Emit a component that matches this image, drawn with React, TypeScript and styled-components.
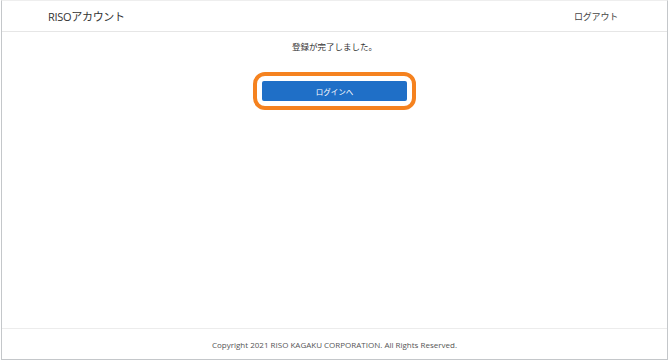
import React from "react"
import styled, { createGlobalStyle } from "styled-components"

const GlobalStyle = createGlobalStyle`
  html, body {
    margin: 0;
    padding: 0;
    background: #ffffff;
  }
  body {
    font-family: "Open Sans", "Noto Sans CJK JP", sans-serif;
    color: #333333;
  }
`

const Frame = styled.div`
  box-sizing: border-box;
  width: 667px;
  height: 360px;
  margin-left: 1px;
  border: 1px solid #c4c7ca;
  border-top-color: #eeeeee;
  display: flex;
  flex-direction: column;
  background: #ffffff;
`

const Header = styled.header`
  height: 30px;
  flex-shrink: 0;
  display: flex;
  align-items: center;
  justify-content: space-between;
  padding: 0 49px 0 46px;
  border-bottom: 1px solid #e6e6e6;
`

const Brand = styled.div`
  font-size: 11px;
  color: #333333;
  letter-spacing: -0.3px;
`

const LogoutLink = styled.a`
  font-size: 9px;
  color: #444444;
  text-decoration: none;
  letter-spacing: -0.2px;
  cursor: pointer;
`

const Main = styled.main`
  flex: 1;
  display: flex;
  flex-direction: column;
  align-items: center;
  padding-top: 9px;
`

const Message = styled.p`
  margin: 0;
  font-size: 8.5px;
  line-height: 12px;
  color: #333333;
`

const Highlight = styled.div`
  margin-top: 19px;
  padding: 5px;
  border: 4px solid #f5821f;
  border-radius: 12px;
`

const PrimaryButton = styled.button`
  display: block;
  width: 145px;
  height: 20px;
  padding: 0;
  border: none;
  border-radius: 2px;
  background: #1f6fc7;
  color: #ffffff;
  font-family: "Open Sans", "Noto Sans CJK JP", sans-serif;
  font-size: 7.5px;
  cursor: pointer;
`

const Footer = styled.footer`
  height: 30px;
  flex-shrink: 0;
  display: flex;
  align-items: center;
  justify-content: center;
  border-top: 1px solid #ececec;
  font-size: 8px;
  color: #555555;
`

const App: React.FC = () => (
  <>
    <GlobalStyle />
    <Frame>
      <Header>
        <Brand>RISOアカウント</Brand>
        <LogoutLink>ログアウト</LogoutLink>
      </Header>
      <Main>
        <Message>登録が完了しました。</Message>
        <Highlight>
          <PrimaryButton>ログインへ</PrimaryButton>
        </Highlight>
      </Main>
      <Footer>Copyright 2021 RISO KAGAKU CORPORATION. All Rights Reserved.</Footer>
    </Frame>
  </>
)

export default App
